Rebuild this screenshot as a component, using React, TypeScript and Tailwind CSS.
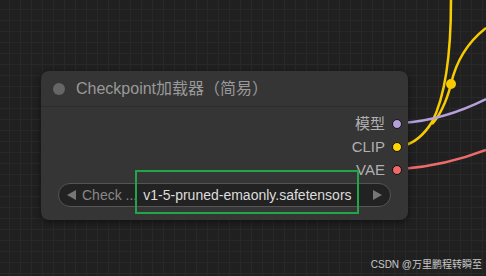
import React from "react";

const font = { fontFamily: '"Liberation Sans", Arial, "Noto Sans CJK SC", sans-serif' };

function Output({ label, color }: { label: string; color: string }) {
  return (
    <div className="flex items-center justify-end gap-[7px] h-[23px]">
      <span className="text-[15px] text-[#b0b0b0] leading-none">{label}</span>
      <span
        className="w-[10px] h-[10px] rounded-full border border-[#111]"
        style={{ background: color }}
      />
    </div>
  );
}

export default function App() {
  return (
    <div
      className="relative w-[486px] h-[276px] overflow-hidden bg-[#202020]"
      style={{
        ...font,
        backgroundImage:
          "linear-gradient(#282828 1px, transparent 1px), linear-gradient(90deg, #282828 1px, transparent 1px)",
        backgroundSize: "11px 11px",
        backgroundPosition: "9px 9px",
      }}
    >
      <svg className="absolute inset-0" width="486" height="276">
        <path d="M451 0 C451 50 446 95 432 122 C422 138 412 144 402 146" stroke="#f6cb00" strokeWidth="2.5" fill="none" />
        <path d="M486 28 C468 42 456 62 451 84 C446 104 438 118 432 124" stroke="#f6cb00" strokeWidth="2.5" fill="none" />
        <circle cx="451" cy="84" r="5" fill="#f6cb00" />
        <path d="M402 123 C430 121 460 112 486 99" stroke="#b69fdb" strokeWidth="2.5" fill="none" />
        <path d="M402 169 C430 167 460 160 486 150" stroke="#ee6b6b" strokeWidth="2.5" fill="none" />
      </svg>

      <div className="absolute left-[41px] top-[71px] w-[367px] h-[149px] rounded-[8px] bg-[#353535] shadow-[0_2px_6px_rgba(0,0,0,0.5)] flex flex-col">
        <div className="h-[36px] flex items-center pl-[12px] gap-[11px] border-b border-[#2c2c2c]">
          <span className="w-[12px] h-[12px] rounded-full bg-[#666]" />
          <span className="text-[16px] text-[#999]" style={font}>Checkpoint加载器（简易）</span>
        </div>
        <div className="flex flex-col pr-[6px] pt-[5px]">
          <Output label="模型" color="#b39ddb" />
          <Output label="CLIP" color="#ffd500" />
          <Output label="VAE" color="#f06868" />
        </div>
        <div className="mx-[17px] mt-[2px] h-[24px] rounded-full bg-[#222] border border-[#555] flex items-center px-[7px]">
          <svg width="11" height="12" viewBox="0 0 11 12"><path d="M10 1 L1 6 L10 11 Z" fill="#777" /></svg>
          <span className="ml-[5px] text-[14px] text-[#888] whitespace-nowrap">Check ...</span>
          <span className="ml-[6px] text-[14px] text-[#ddd] whitespace-nowrap">v1-5-pruned-emaonly.safetensors</span>
          <span className="flex-1" />
          <svg width="11" height="12" viewBox="0 0 11 12"><path d="M1 1 L10 6 L1 11 Z" fill="#777" /></svg>
        </div>
      </div>

      <div className="absolute left-[135px] top-[170px] w-[224px] h-[44px] border-2 border-[#22a548]" />

      <div className="absolute right-[4px] top-[257px] text-[10px] text-[#c8c8c8] whitespace-nowrap">
        CSDN @万里鹏程转瞬至
      </div>
    </div>
  );
}
